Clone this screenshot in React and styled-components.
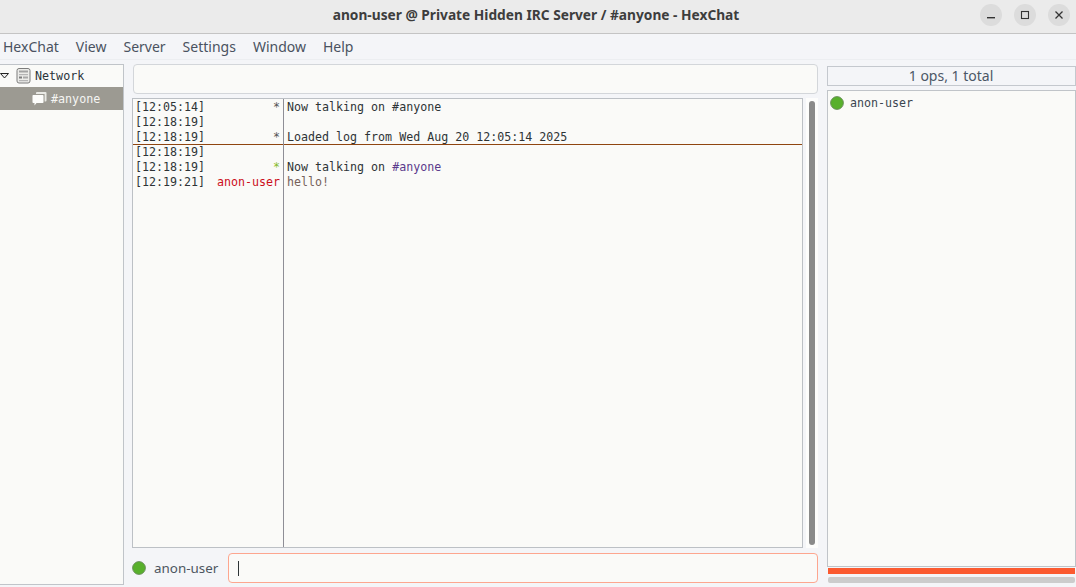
import React from "react";
import styled, { createGlobalStyle } from "styled-components";

const Global = createGlobalStyle`
  html, body { margin: 0; padding: 0; width: 1076px; height: 587px; overflow: hidden; background: #f4f5f8; }
  #root { width: 1076px; height: 587px; }
  * { box-sizing: border-box; }
`;
const UI = `"Noto Sans", "Open Sans", sans-serif`;
const MONO = `"DejaVu Sans Mono", "Liberation Mono", monospace`;

const Window = styled.div`
  width: 1076px; height: 587px; display: flex; flex-direction: column;
  background: #f4f5f8; font-family: ${UI}; color: #3d3d3d;
`;
const TitleBar = styled.header`
  height: 34px; flex: none; display: flex; align-items: center; justify-content: center;
  position: relative; background: #ebebeb; border-bottom: 1px solid #c4c4c4;
`;
const Title = styled.h1`
  margin: 0; font-size: 13.73px; font-weight: 700; color: #3d3d3d; position: relative; left: -2px; top: -2px;
`;
const WinButtons = styled.div`
  position: absolute; right: 6px; top: 4px; display: flex; gap: 12px;
`;
const WinButton = styled.button`
  width: 22px; height: 22px; border: 0; padding: 0; border-radius: 50%; background: #dcdcdc;
  display: flex; align-items: center; justify-content: center; color: #333;
`;
const MenuBar = styled.nav`
  height: 26px; flex: none; display: flex; align-items: center; gap: 17px; padding: 0 0 0 3px;
  background: #f4f5f8; border-bottom: 1px solid #eceef1; font-size: 14px; color: #4a5260;
`;
const MenuItem = styled.span`line-height: 25px;`;
const Body = styled.main`
  flex: 1; min-height: 0; display: grid; grid-template-columns: 124px 694px 249px;
  padding: 4px 0 0 0; justify-content: start;
`;
const Tree = styled.aside`
  width: 124px; height: 521px; background: #fafaf8; border: solid #c0c4c9; border-width: 1px 1px 1px 0;
  color: #2e3436;
`;
const NetRow = styled.div`
  height: 22px; display: flex; align-items: center; font-family: ${MONO}; font-size: 11.7px; color: #29333a;
  svg { flex: none; }
`;
const ChanRow = styled.div`
  height: 23px; background: #9c9a92; color: #f5f5f2; display: flex; align-items: center;
  padding-left: 32px; gap: 4px; font-family: ${MONO}; font-size: 11.7px;
`;
const Center = styled.section`
  margin-left: 8px; width: 686px; display: flex; flex-direction: column;
`;
const Topic = styled.div`
  height: 30px; margin-left: 1px; background: #fafaf8; border: 1px solid #d3d6da; border-radius: 4px; flex: none;
`;
const ChatRow = styled.div`
  height: 450px; margin-top: 4px; display: flex; flex: none;
`;
const Chat = styled.div`
  width: 672px; height: 450px; background: #fafaf8; border: 1px solid #bcc0c5; position: relative;
  font-family: ${MONO}; font-size: 11.65px; line-height: 15px; color: #2e3436; padding-top: 1px;
`;
const Marker = styled.div`
  position: absolute; left: 0; right: 0; top: 45px; height: 1px; background: #8f4510;
`;
const Sep = styled.div`
  position: absolute; left: 150px; top: 0; bottom: 0; width: 1px; background: #8e8e96;
`;
const Line = styled.div`
  display: grid; grid-template-columns: 78px 67px 1fr; height: 15px; padding-left: 2px; white-space: pre;
`;
const Stamp = styled.span`color: #2e3436;`;
const Nick = styled.span`text-align: right; color: ${p => p.$c || "#555"};`;
const Msg = styled.span`padding-left: 7px; color: ${p => p.$c || "#2e3436"};`;
const Chan = styled.span`color: #5b3a8c;`;
const Scroll = styled.div`
  width: 12px; height: 450px; margin-left: 3px; background: #fdfdfc; padding: 3px;
`;
const Thumb = styled.div`
  width: 6px; height: 100%; border-radius: 3px; background: #8a8a8a;
`;
const InputRow = styled.div`
  height: 30px; margin-top: 5px; display: flex; align-items: center; flex: none;
`;
const NickName = styled.span`
  font-size: 13.4px; color: #4c5560; margin-left: 8px; width: 74px;
`;
const Input = styled.div`
  width: 590px; height: 30px; background: #fafaf8; border: 1px solid #fda68f; border-radius: 4px;
  display: flex; align-items: center; padding-left: 9px;
`;
const Caret = styled.span`width: 1px; height: 15px; background: #2e3436;`;
const Right = styled.aside`
  margin-left: 9px; width: 249px; display: flex; flex-direction: column; padding-top: 2px;
`;
const Count = styled.div`
  height: 20px; background: #f4f5f8; border: 1px solid #c4c8ce; text-align: center; font-size: 14px;
  line-height: 17px; color: #4c5766; flex: none; padding-right: 1px;
`;
const Users = styled.div`
  height: 477px; margin-top: 4px; background: #fafaf8; border: 1px solid #c0c4c9; flex: none;
`;
const UserRow = styled.div`
  display: flex; align-items: center; height: 22px; margin-top: 1px; padding-left: 2px; gap: 6px;
  font-family: ${MONO}; font-size: 11.65px; color: #3b4650;
`;
const RedBar = styled.div`
  height: 6px; margin: 1px 1px 0 1px; background: #fb5a30; flex: none;
`;
const GrayBar = styled.div`
  height: 6px; margin: 3px 1px 0 1px; background: #cccccc; border-radius: 2px; flex: none;
`;

const Dot = () => (
  <svg width="14" height="14" viewBox="0 0 14 14" aria-hidden="true">
    <circle cx="7" cy="7" r="6.4" fill="#58b02c" stroke="#68895a" strokeWidth="0.9" />
  </svg>
);

const Lines = [
  ["[12:05:14]", "*", "Now talking on #anyone", "#555"],
  ["[12:18:19]", "", "", ""],
  ["[12:18:19]", "*", "Loaded log from Wed Aug 20 12:05:14 2025", "#555"],
  ["[12:18:19]", "", "", ""],
  ["[12:18:19]", "*", <>Now talking on <Chan>#anyone</Chan></>, "#86bb2b"],
  ["[12:19:21]", "anon-user", "hello!", "#cc0f1b", "#76615a"],
];

export default function App() {
  return (
    <Window>
      <Global />
      <TitleBar>
        <Title>anon-user @ Private Hidden IRC Server / #anyone - HexChat</Title>
        <WinButtons>
          <WinButton aria-label="minimize">
            <svg width="22" height="22" viewBox="0 0 22 22"><rect x="7" y="13" width="8" height="1.4" fill="currentColor" /></svg>
          </WinButton>
          <WinButton aria-label="maximize">
            <svg width="22" height="22" viewBox="0 0 22 22"><rect x="7.5" y="7.5" width="7" height="7" fill="none" stroke="currentColor" strokeWidth="1.1" /></svg>
          </WinButton>
          <WinButton aria-label="close">
            <svg width="22" height="22" viewBox="0 0 22 22"><path d="M7.5 7.5 L14.5 14.5 M14.5 7.5 L7.5 14.5" stroke="currentColor" strokeWidth="1.3" /></svg>
          </WinButton>
        </WinButtons>
      </TitleBar>
      <MenuBar>
        {["HexChat", "View", "Server", "Settings", "Window", "Help"].map(m => <MenuItem key={m}>{m}</MenuItem>)}
      </MenuBar>
      <Body>
        <Tree>
          <NetRow>
            <svg width="10" height="10" viewBox="0 0 10 10">
              <path d="M0.5 2.5 H8.5 L4.5 7 Z" fill="#eee" stroke="#222" strokeWidth="1" />
            </svg>
            <svg width="15" height="16" viewBox="0 0 15 16" style={{ marginLeft: 6, marginRight: 4 }}>
              <rect x="1" y="0.5" width="13" height="14.5" rx="2" fill="#ecece9" stroke="#7c7c7c" />
              <rect x="3" y="2.5" width="9" height="2" fill="#a3a3a3" />
              <rect x="3" y="6" width="9" height="1.2" fill="#b5b5b5" />
              <rect x="3" y="8.5" width="3" height="2" fill="#7e7e7e" />
              <rect x="7" y="8.5" width="5" height="2" fill="#a8a8a8" />
              <rect x="3" y="12" width="9" height="1.2" fill="#b5b5b5" />
            </svg>
            Network
          </NetRow>
          <ChanRow>
            <svg width="15" height="16" viewBox="0 0 15 16">
              <path d="M4 2 Q4 1 5 1 H13.5 Q14.5 1 14.5 2 V9.5 Q14.5 10.5 13.5 10.5 H12.6 V3 H4 Z" fill="#e9e9e4" />
              <path d="M0.5 4.8 Q0.5 4 1.3 4 H10.7 Q11.5 4 11.5 4.8 V11.2 Q11.5 12 10.7 12 H4.5 L2.5 14.5 V12 H1.3 Q0.5 12 0.5 11.2 Z" fill="#fdfdfb" />
            </svg>
            #anyone
          </ChanRow>
        </Tree>
        <Center>
          <Topic />
          <ChatRow>
            <Chat>
              <Marker />
              <Sep />
              {Lines.map((l, i) => (
                <Line key={i}>
                  <Stamp>{l[0]}</Stamp>
                  <Nick $c={l[3]}>{l[1]}</Nick>
                  <Msg $c={l[4]}>{l[2]}</Msg>
                </Line>
              ))}
            </Chat>
            <Scroll><Thumb /></Scroll>
          </ChatRow>
          <InputRow>
            <Dot />
            <NickName>anon-user</NickName>
            <Input><Caret /></Input>
          </InputRow>
        </Center>
        <Right>
          <Count>1 ops, 1 total</Count>
          <Users>
            <UserRow><Dot />anon-user</UserRow>
          </Users>
          <RedBar />
          <GrayBar />
        </Right>
      </Body>
    </Window>
  );
}
